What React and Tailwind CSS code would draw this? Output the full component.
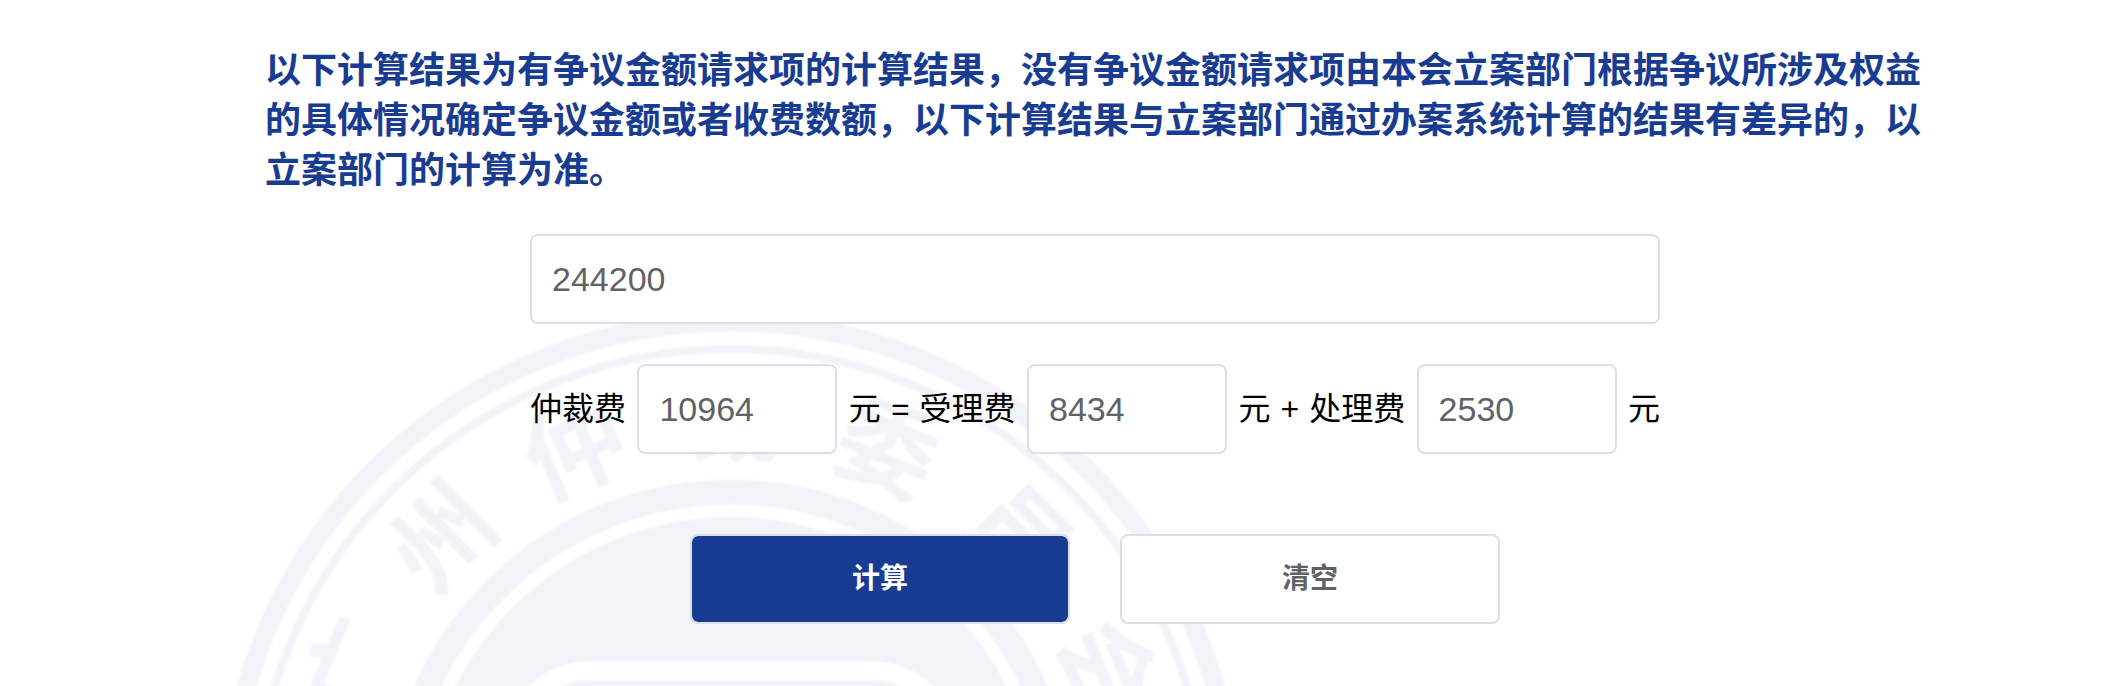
import { useState } from "react";

const SEAL_TEXT = ["广", "州", "仲", "裁", "委", "员", "会"];

function Seal() {
  return (
    <svg
      aria-hidden="true"
      viewBox="-514 -514 1028 1028"
      className="pointer-events-none absolute top-[312px] left-[217px] size-[1028px] text-[#f1f3f8] blur-[1px]"
    >
      <circle r="504" fill="none" stroke="currentColor" strokeWidth="19" />
      <circle r="477" fill="none" stroke="currentColor" strokeWidth="8" />
      <circle r="334" fill="none" stroke="currentColor" strokeWidth="25" />
      <circle r="309" fill="currentColor" />
      <rect x="-221" y="-155" width="442" height="310" rx="80" fill="none" stroke="#fff" strokeWidth="19" />
      {SEAL_TEXT.map((char, i) => (
        <text
          key={char}
          y="-372"
          textAnchor="middle"
          fill="currentColor"
          transform={`rotate(${(i - 3) * 22.5})`}
          className="text-[100px] font-bold"
        >
          {char}
        </text>
      ))}
    </svg>
  );
}

const fieldClass =
  "h-[90px] rounded-lg border-2 border-[#dcdfe6] bg-white px-5 text-[34px] text-[#606266] outline-none focus:border-[#193c93]";
const buttonClass =
  "h-[90px] w-[380px] rounded-lg border-2 border-[#dcdfe6] bg-clip-padding text-[28px] font-bold";

function Fee({ id, parts, value }) {
  return (
    <>
      <label htmlFor={id} className="flex gap-2.5">
        {parts.map((part) => (
          <span key={part}>{part}</span>
        ))}
      </label>
      <input id={id} readOnly value={value} className={`${fieldClass} w-[200px]`} />
    </>
  );
}

const START = { total: "10964", accept: "8434", handle: "2530" };
const EMPTY = { total: "", accept: "", handle: "" };

export default function App() {
  const [amount, setAmount] = useState("244200");
  const [fees, setFees] = useState(START);

  const calculate = () => setFees(amount === "244200" ? START : EMPTY);
  const clear = () => {
    setAmount("");
    setFees(EMPTY);
  };

  return (
    <div className="relative min-h-screen overflow-hidden bg-white font-['Liberation_Sans','Noto_Sans_CJK_SC',sans-serif] text-black">
      <Seal />
      <main className="relative pt-[46px] pr-[183px] pb-[60px] pl-[265px]">
        <p className="text-[36px] leading-[50px] font-bold text-[#193c93]">
          以下计算结果为有争议金额请求项的计算结果，没有争议金额请求项由本会立案部门根据争议所涉及权益的具体情况确定争议金额或者收费数额，以下计算结果与立案部门通过办案系统计算的结果有差异的，以立案部门的计算为准。
        </p>
        <form
          className="mx-auto mt-[38px] flex max-w-[1130px] flex-col"
          onSubmit={(e) => {
            e.preventDefault();
            calculate();
          }}
        >
          <input
            aria-label="争议金额"
            value={amount}
            onChange={(e) => setAmount(e.target.value)}
            className={`${fieldClass} w-full`}
          />
          <div className="mt-10 flex items-center justify-between text-[32px] whitespace-nowrap">
            <Fee id="total" parts={["仲裁费"]} value={fees.total} />
            <Fee id="accept" parts={["元", "=", "受理费"]} value={fees.accept} />
            <Fee id="handle" parts={["元", "+", "处理费"]} value={fees.handle} />
            <span>元</span>
          </div>
          <div className="mt-20 flex justify-center gap-[50px]">
            <button type="submit" className={`${buttonClass} bg-[#193c93] text-white`}>
              计算
            </button>
            <button type="button" onClick={clear} className={`${buttonClass} bg-white text-[#606266]`}>
              清空
            </button>
          </div>
        </form>
      </main>
    </div>
  );
}
